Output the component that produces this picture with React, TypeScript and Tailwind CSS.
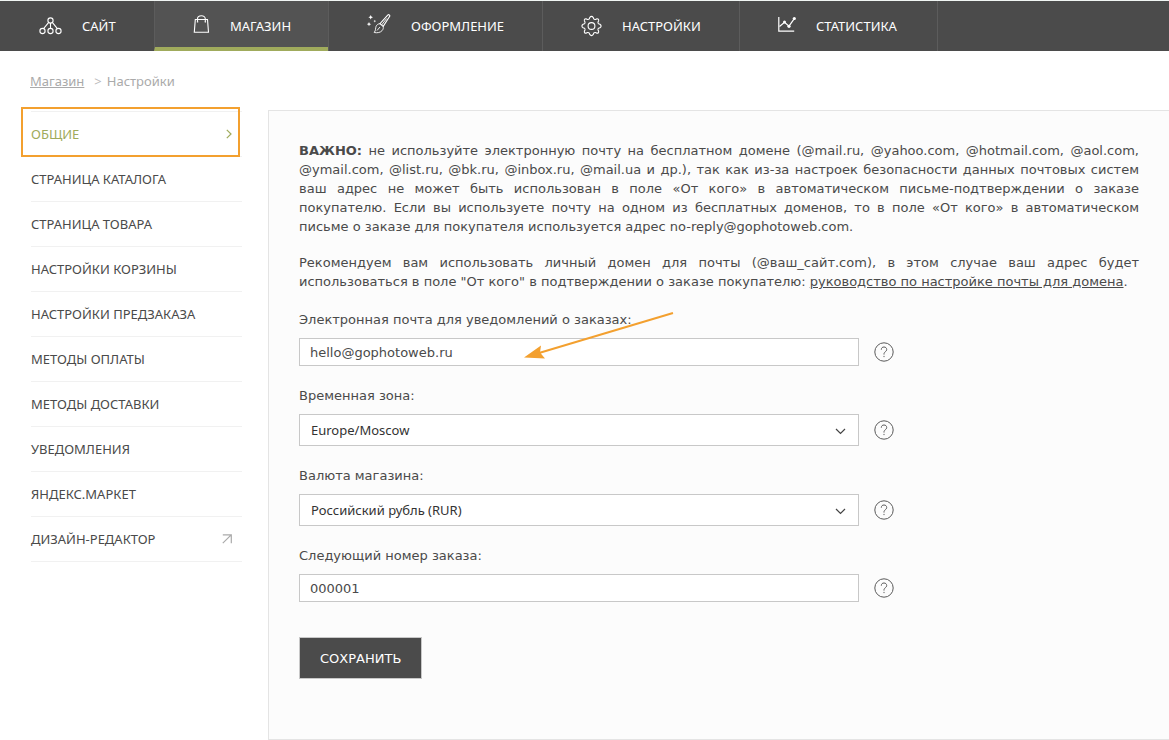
import type { ReactNode } from "react";

const SiteIcon = () => (
  <svg width="23" height="18" viewBox="0 0 23 18" fill="none" stroke="currentColor" strokeWidth="1.1" className="shrink-0">
    <circle cx="11.5" cy="3.5" r="2.6" />
    <circle cx="3.5" cy="14" r="2.6" />
    <circle cx="11.5" cy="14" r="2.6" />
    <circle cx="19.5" cy="14" r="2.6" />
    <path d="M9.7 5.4 4.6 11.6M11.5 6.1v5.3M13.3 5.4l5.1 6.2" />
  </svg>
);

const BagIcon = () => (
  <svg width="17" height="18" viewBox="0 0 17 18" fill="none" stroke="currentColor" strokeWidth="1.1" className="mb-1 shrink-0">
    <path d="M2.3 4.5h12.2l1 12.8H1.3z" />
    <path d="M4.5 6.8V3.9C4.5 2 6.2.7 8.4.7s3.9 1.3 3.9 3.2v2.9" />
    <path d="M3.9 6.8h1.3M11.7 6.8H13" strokeWidth="1.3" />
  </svg>
);

const BrushIcon = () => (
  <svg width="24" height="20" viewBox="0 0 24 20" fill="none" stroke="currentColor" strokeWidth="1.1" className="mb-1 shrink-0">
    <path d="M22.3.9c.7.5.5 1.3.1 1.9l-6.2 9.6-3.2-2.7L20.7 1.2c.5-.5 1.1-.7 1.6-.3z" />
    <path d="M13 9.7c-1.700 0-3.200 1-3.900 2.600-.8 1.900-.1 4-1.900 6.200 3.100.6 6.200.1 7.900-1.900 1.200-1.400 1.400-2.800 1.100-4.200M10 16.500l3-3.500M14.600 11l5-6.500" strokeWidth=".9" />
    <path d="M3.7 1 4.400 2.600 6 3.200l-1.600.7-.7 1.600L3 3.900l-1.600-.7L3 2.600zM2 8l.7 1.500 1.500.7-1.500.6L2 12.300l-.7-1.500-1.500-.6 1.500-.7zM7.800 5.700l.4 1 1 .4-1 .4-.4 1-.4-1-1-.4 1-.4z" fill="currentColor" stroke="none" />
  </svg>
);

const GearIcon = () => (
  <svg width="21" height="22" viewBox="0 0 21 22" fill="none" stroke="currentColor" strokeWidth="1.100" strokeLinejoin="round" className="shrink-0">
    <circle cx="10.500" cy="11" r="3.400" />
    <path d="M8.700 2.600Q10.500.2 12.300 2.600L12.700 3.900Q13.400 4.700 14.400 4.500L15.600 3.900Q18 3.500 17.600 5.900L17 7.100Q16.800 8.100 17.600 8.800L18.900 9.200Q21.300 11 18.900 12.800L17.600 13.200Q16.800 13.900 17 14.900L17.600 16.100Q18 18.500 15.600 18.100L14.400 17.500Q13.400 17.300 12.700 18.100L12.300 19.400Q10.500 21.800 8.700 19.400L8.300 18.100Q7.600 17.300 6.600 17.500L5.400 18.100Q3 18.500 3.400 16.100L4 14.900Q4.200 13.900 3.400 13.200L2.100 12.800Q-.3 11 2.100 9.200L3.400 8.800Q4.200 8.100 4 7.100L3.400 5.900Q3 3.500 5.400 3.900L6.600 4.500Q7.600 4.700 8.300 3.900Z" />
  </svg>
);

const ChartIcon = () => (
  <svg width="18" height="17" viewBox="0 0 18 17" fill="none" stroke="currentColor" strokeWidth="1.2" className="mb-1 shrink-0">
    <path d="M.8 1v14.200h15.400" />
    <path d="m1.500 10.500 5-4.300 4.500 4 5.300-7.500" />
    <g fill="currentColor" stroke="none">
      <circle cx="6.5" cy="6" r="1.5" />
      <circle cx="11" cy="10.3" r="1.6" />
      <circle cx="16.3" cy="2.5" r="1.6" />
    </g>
  </svg>
);

const HelpIcon = () => (
  <svg width="20" height="20" viewBox="0 0 20 20" fill="none" stroke="currentColor" strokeWidth="1">
    <circle cx="10" cy="10" r="9.2" />
    <path d="M7.300 7.700C7.300 5.900 8.400 5 10 5s2.700 1 2.700 2.500c0 1.100-.6 1.700-1.400 2.300-.8.600-1.300 1.100-1.300 2.400v.4M10 13.900v1.200" />
  </svg>
);

const nav = [
  { title: "САЙТ", icon: <SiteIcon />, style: "w-[154px] pl-[39px]" },
  {
    title: "МАГАЗИН",
    icon: <BagIcon />,
    style: "w-[174px] border-l border-b-4 border-l-[#5c5c5c] border-b-[#a0ab5c] bg-[#535353] pt-1 pl-[38px]",
  },
  { title: "ОФОРМЛЕНИЕ", icon: <BrushIcon />, style: "w-[214px] border-l border-[#5c5c5c] pl-[38px]" },
  { title: "НАСТРОЙКИ", icon: <GearIcon />, style: "w-[197px] border-l border-[#5c5c5c] pl-[38px]" },
  { title: "СТАТИСТИКА", icon: <ChartIcon />, style: "w-[199px] border-x border-[#5c5c5c] pl-[38px]" },
];

const sections = [
  "ОБЩИЕ",
  "СТРАНИЦА КАТАЛОГА",
  "СТРАНИЦА ТОВАРА",
  "НАСТРОЙКИ КОРЗИНЫ",
  "НАСТРОЙКИ ПРЕДЗАКАЗА",
  "МЕТОДЫ ОПЛАТЫ",
  "МЕТОДЫ ДОСТАВКИ",
  "УВЕДОМЛЕНИЯ",
  "ЯНДЕКС.МАРКЕТ",
  "ДИЗАЙН-РЕДАКТОР",
];

function Field({ id, label, children }: { id: string; label: string; children: ReactNode }) {
  return (
    <div>
      <label htmlFor={id} className="mb-[9px] block w-fit">
        {label}
      </label>
      <div className="flex items-center gap-[15px]">
        <div className="relative w-full max-w-[560px]">{children}</div>
        <button type="button" aria-label="Справка" className="shrink-0 text-[#5a5a5a]">
          <HelpIcon />
        </button>
      </div>
    </div>
  );
}

function Select({ id, value }: { id: string; value: string }) {
  return (
    <>
      <select
        id={id}
        className="block h-8 w-full appearance-none border border-[#c8c8c8] bg-white pr-8 pl-[11px] font-['Noto_Sans',sans-serif] text-[13px] text-[#333] outline-none"
      >
        <option>{value}</option>
      </select>
      <svg
        width="11"
        height="7"
        viewBox="0 0 11 7"
        fill="none"
        stroke="#444"
        strokeWidth="1.2"
        className="pointer-events-none absolute top-[14px] right-[13px]"
      >
        <path d="m1 1 4.500 4.500L10 1" />
      </svg>
    </>
  );
}

const inputClass = "block h-7 w-full border border-[#c8c8c8] bg-white px-2.5 text-[13px] outline-none";

export default function App() {
  return (
    <div className="min-h-screen bg-white font-['DejaVu_Sans',sans-serif] text-[13px] leading-[19px] text-[#4a4a4a]">
      <header className="border-t border-[#f0f5f3] bg-[#4b4b4b] font-['Noto_Sans',sans-serif] text-white">
        <nav className="flex h-[50px]">
          {nav.map((item) => (
            <a key={item.title} href="#" className={`flex shrink-0 items-center gap-5 ${item.style}`}>
              {item.icon}
              <span>{item.title}</span>
            </a>
          ))}
        </nav>
      </header>

      <div className="flex gap-[5px] px-[30px] pt-[21px] font-['Noto_Sans',sans-serif] text-[#aaa]">
        <a href="#" className="mr-[5px] underline">
          Магазин
        </a>
        <span className="text-[#bbb]">&gt;</span>
        <span>Настройки</span>
      </div>

      <div className="flex items-start pt-[19px]">
        <aside className="relative mt-px ml-[31px] w-[211px] shrink-0 font-['Noto_Sans',sans-serif]">
          <ul className="border-t border-[#f1f1f1]">
            {sections.map((title, i) => (
              <li key={title} className="border-b border-[#f1f1f1]">
                <a
                  href="#"
                  className={
                    i === 0
                      ? "flex h-11 items-center justify-between pr-2.5 text-[#a0ab5c]"
                      : "flex h-11 items-center justify-between pr-2.5"
                  }
                >
                  {title}
                  {i === 0 && (
                    <svg width="6" height="10" viewBox="0 0 6 10" fill="none" stroke="currentColor" strokeWidth="1.2">
                      <path d="m.8.8 4.200 4.200L.8 9.200" />
                    </svg>
                  )}
                  {i === sections.length - 1 && (
                    <svg width="10" height="10" viewBox="0 0 10 10" fill="none" stroke="#aaa" strokeWidth="1.2">
                      <path d="M.8 9.200 9.200.8M.8.8h8.500v8.400" />
                    </svg>
                  )}
                </a>
              </li>
            ))}
          </ul>
          <div className="pointer-events-none absolute -top-1 right-0.5 -left-2.5 h-[50px] border-2 border-[#f3a02f]" />
        </aside>

        <main className="ml-[26px] min-w-0 flex-1 border border-r-0 border-[#e4e4e4] bg-[#fcfcfc] px-[30px] pt-[30px] pb-[60px]">
          <p className="mb-[17px] text-justify">
            <b>ВАЖНО:</b> не используйте электронную почту на бесплатном домене (@mail.ru, @yahoo.com, @hotmail.com,
            @aol.com, @ymail.com, @list.ru, @bk.ru, @inbox.ru, @mail.ua и др.), так как из-за настроек безопасности
            данных почтовых систем ваш адрес не может быть использован в поле «От кого» в автоматическом
            письме-подтверждении о заказе покупателю. Если вы используете почту на одном из бесплатных доменов, то в
            поле «От кого» в автоматическом письме о заказе для покупателя используется адрес no-reply@gophotoweb.com.
          </p>
          <p className="mb-[19px] text-justify">
            Рекомендуем вам использовать личный домен для почты (@ваш_сайт.com), в этом случае ваш адрес будет
            использоваться в поле "От кого" в подтверждении о заказе покупателю:{" "}
            <a href="#" className="underline">
              руководство по настройке почты для домена
            </a>
            .
          </p>

          <form className="flex flex-col gap-5" onSubmit={(e) => e.preventDefault()}>
            <Field id="email" label="Электронная почта для уведомлений о заказах:">
              <input id="email" type="text" defaultValue="hello@gophotoweb.ru" className={inputClass} />
              <svg
                width="152"
                height="50"
                viewBox="0 0 152 50"
                className="pointer-events-none absolute -top-[26px] left-[225px]"
              >
                <path d="M149 1 15 41" stroke="#f3a02f" strokeWidth="2" fill="none" />
                <path d="m0 45.500 17-12-1 7 5 6z" fill="#f3a02f" />
              </svg>
            </Field>
            <Field id="zone" label="Временная зона:">
              <Select id="zone" value="Europe/Moscow" />
            </Field>
            <Field id="currency" label="Валюта магазина:">
              <Select id="currency" value="Российский рубль (RUR)" />
            </Field>
            <Field id="order" label="Следующий номер заказа:">
              <input id="order" type="text" defaultValue="000001" className={inputClass} />
            </Field>
            <button
              type="submit"
              className="mt-[15px] h-[42px] w-fit border border-[#c8c8c8] bg-[#4b4b4b] px-5 text-white"
            >
              СОХРАНИТЬ
            </button>
          </form>
        </main>
      </div>
    </div>
  );
}
